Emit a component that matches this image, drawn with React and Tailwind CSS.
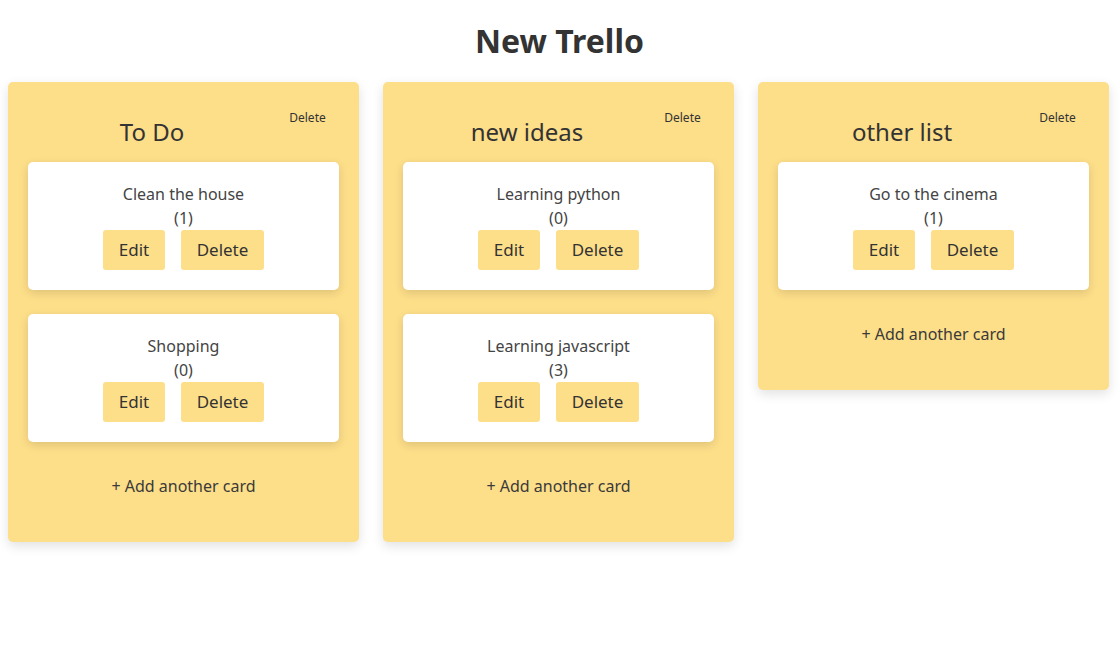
import React from "react";

const lists = [
  {
    title: "To Do",
    cards: [
      { text: "Clean the house", count: 1 },
      { text: "Shopping", count: 0 },
    ],
  },
  {
    title: "new ideas",
    cards: [
      { text: "Learning python", count: 0 },
      { text: "Learning javascript", count: 3 },
    ],
  },
  {
    title: "other list",
    cards: [{ text: "Go to the cinema", count: 1 }],
  },
];

function Card({ text, count }) {
  return (
    <div className="bg-white rounded-[5px] p-5 pb-5 text-center text-[#444] shadow-[0_3px_10px_rgba(0,0,0,0.13)]">
      <div className="text-base leading-6">{text}</div>
      <div className="text-base leading-6">({count})</div>
      <div className="flex justify-center gap-4">
        <button className="w-[62px] h-10 rounded-[3px] bg-[#fdde89] text-[17px] text-[#333]">Edit</button>
        <button className="w-[83px] h-10 rounded-[3px] bg-[#fdde89] text-[17px] text-[#333]">Delete</button>
      </div>
    </div>
  );
}

function List({ title, cards }) {
  return (
    <div className="w-[351px] bg-[#fdde89] rounded-[5px] px-5 pt-5 pb-[44px] shadow-[0_4px_12px_rgba(0,0,0,0.12)]">
      <div className="flex items-start h-[60px]">
        <h2 className="flex-1 text-center text-2xl leading-8 pt-[14px] text-[#333]">{title}</h2>
        <button className="w-[63px] text-center text-xs leading-4 pt-[8px] text-[#333]">Delete</button>
      </div>
      <div className="flex flex-col gap-6">
        {cards.map((c, i) => (
          <Card key={i} {...c} />
        ))}
      </div>
      <div className="mt-8 text-center text-base leading-6 text-[#3a3a3a]">+ Add another card</div>
    </div>
  );
}

export default function App() {
  return (
    <div className="min-h-[664px] bg-white" style={{ fontFamily: '"Noto Sans", sans-serif' }}>
      <h1 className="pt-[21px] text-center text-[32px] leading-10 font-bold text-[#333]">New Trello</h1>
      <div className="flex items-start gap-6 px-2 mt-[21px]">
        {lists.map((l, i) => (
          <List key={i} {...l} />
        ))}
      </div>
    </div>
  );
}
